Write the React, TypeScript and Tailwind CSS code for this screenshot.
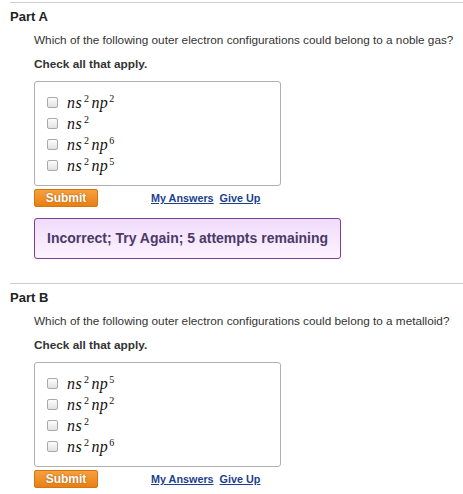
import React from 'react';

type Config = { s: string; p?: string };

function Formula({ s, p }: Config) {
  return (
    <span className="font-['Liberation_Serif','DejaVu_Serif',serif] text-[16px] text-[#111] leading-none tracking-[0.4px]">
      <i>n</i>
      <i>s</i>
      <span className="text-[10px] not-italic relative -top-[6px] ml-[2px] mr-[2px]">{s}</span>
      {p && (
        <>
          <i>n</i>
          <i>p</i>
          <span className="text-[10px] not-italic relative -top-[6px] ml-[1px]">{p}</span>
        </>
      )}
    </span>
  );
}

function Checkbox() {
  return (
    <span className="w-[11px] h-[11px] rounded-[2px] border border-[#a9a9a9] bg-gradient-to-b from-[#fdfdfd] to-[#e2e2e2] shrink-0" />
  );
}

function Part({
  label,
  question,
  options,
  children,
}: {
  label: string;
  question: string;
  options: Config[];
  children?: React.ReactNode;
}) {
  return (
    <div className="ml-[10px] border-t border-[#cfcfcf]">
      <h2 className="mt-[6px] text-[13px] leading-4 font-bold text-[#222]">{label}</h2>
      <div className="pl-[24px]">
        <p className="mt-[7px] text-[11.75px] leading-4 text-[#333]">{question}</p>
        <p className="mt-[8px] text-[11.8px] leading-4 font-bold text-[#333]">Check all that apply.</p>
        <div className="mt-[9px] w-[247px] border border-[#b0b0b0] rounded-[3px] pt-[10px] pb-[9px] pl-[12px]">
          {options.map((o, i) => (
            <div key={i} className="h-[21px] flex items-center gap-[9px]">
              <Checkbox />
              <Formula {...o} />
            </div>
          ))}
        </div>
        <div className="mt-[3px] flex items-center">
          <button className="w-[64px] h-[18px] rounded-[2px] border border-[#d27613] bg-gradient-to-b from-[#f7a03c] to-[#e8800f] text-white text-[12px] font-bold leading-none [text-shadow:0_0_2px_rgba(120,60,0,0.6)]">
            Submit
          </button>
          <a className="ml-[53px] text-[10.8px] font-bold text-[#1d3f8f] underline">My Answers</a>
          <a className="ml-[6px] text-[10.8px] font-bold text-[#1d3f8f] underline">Give Up</a>
        </div>
        {children}
      </div>
    </div>
  );
}

export default function App() {
  return (
    <div className="w-[463px] h-[494px] bg-white font-['Liberation_Sans',Arial,sans-serif] pt-[2px] overflow-hidden">
      <Part
        label="Part A"
        question="Which of the following outer electron configurations could belong to a noble gas?"
        options={[{ s: '2', p: '2' }, { s: '2' }, { s: '2', p: '6' }, { s: '2', p: '5' }]}
      >
        <div className="mt-[11px] mb-[24px] w-[307px] h-[41px] flex items-center pl-[12px] rounded-[3px] border border-[#7a3f98] bg-gradient-to-b from-[#f1dcfb] to-[#fcf3ff] text-[14px] font-bold text-[#4a3a68]">
          Incorrect; Try Again; 5 attempts remaining
        </div>
      </Part>
      <Part
        label="Part B"
        question="Which of the following outer electron configurations could belong to a metalloid?"
        options={[{ s: '2', p: '5' }, { s: '2', p: '2' }, { s: '2' }, { s: '2', p: '6' }]}
      />
    </div>
  );
}
